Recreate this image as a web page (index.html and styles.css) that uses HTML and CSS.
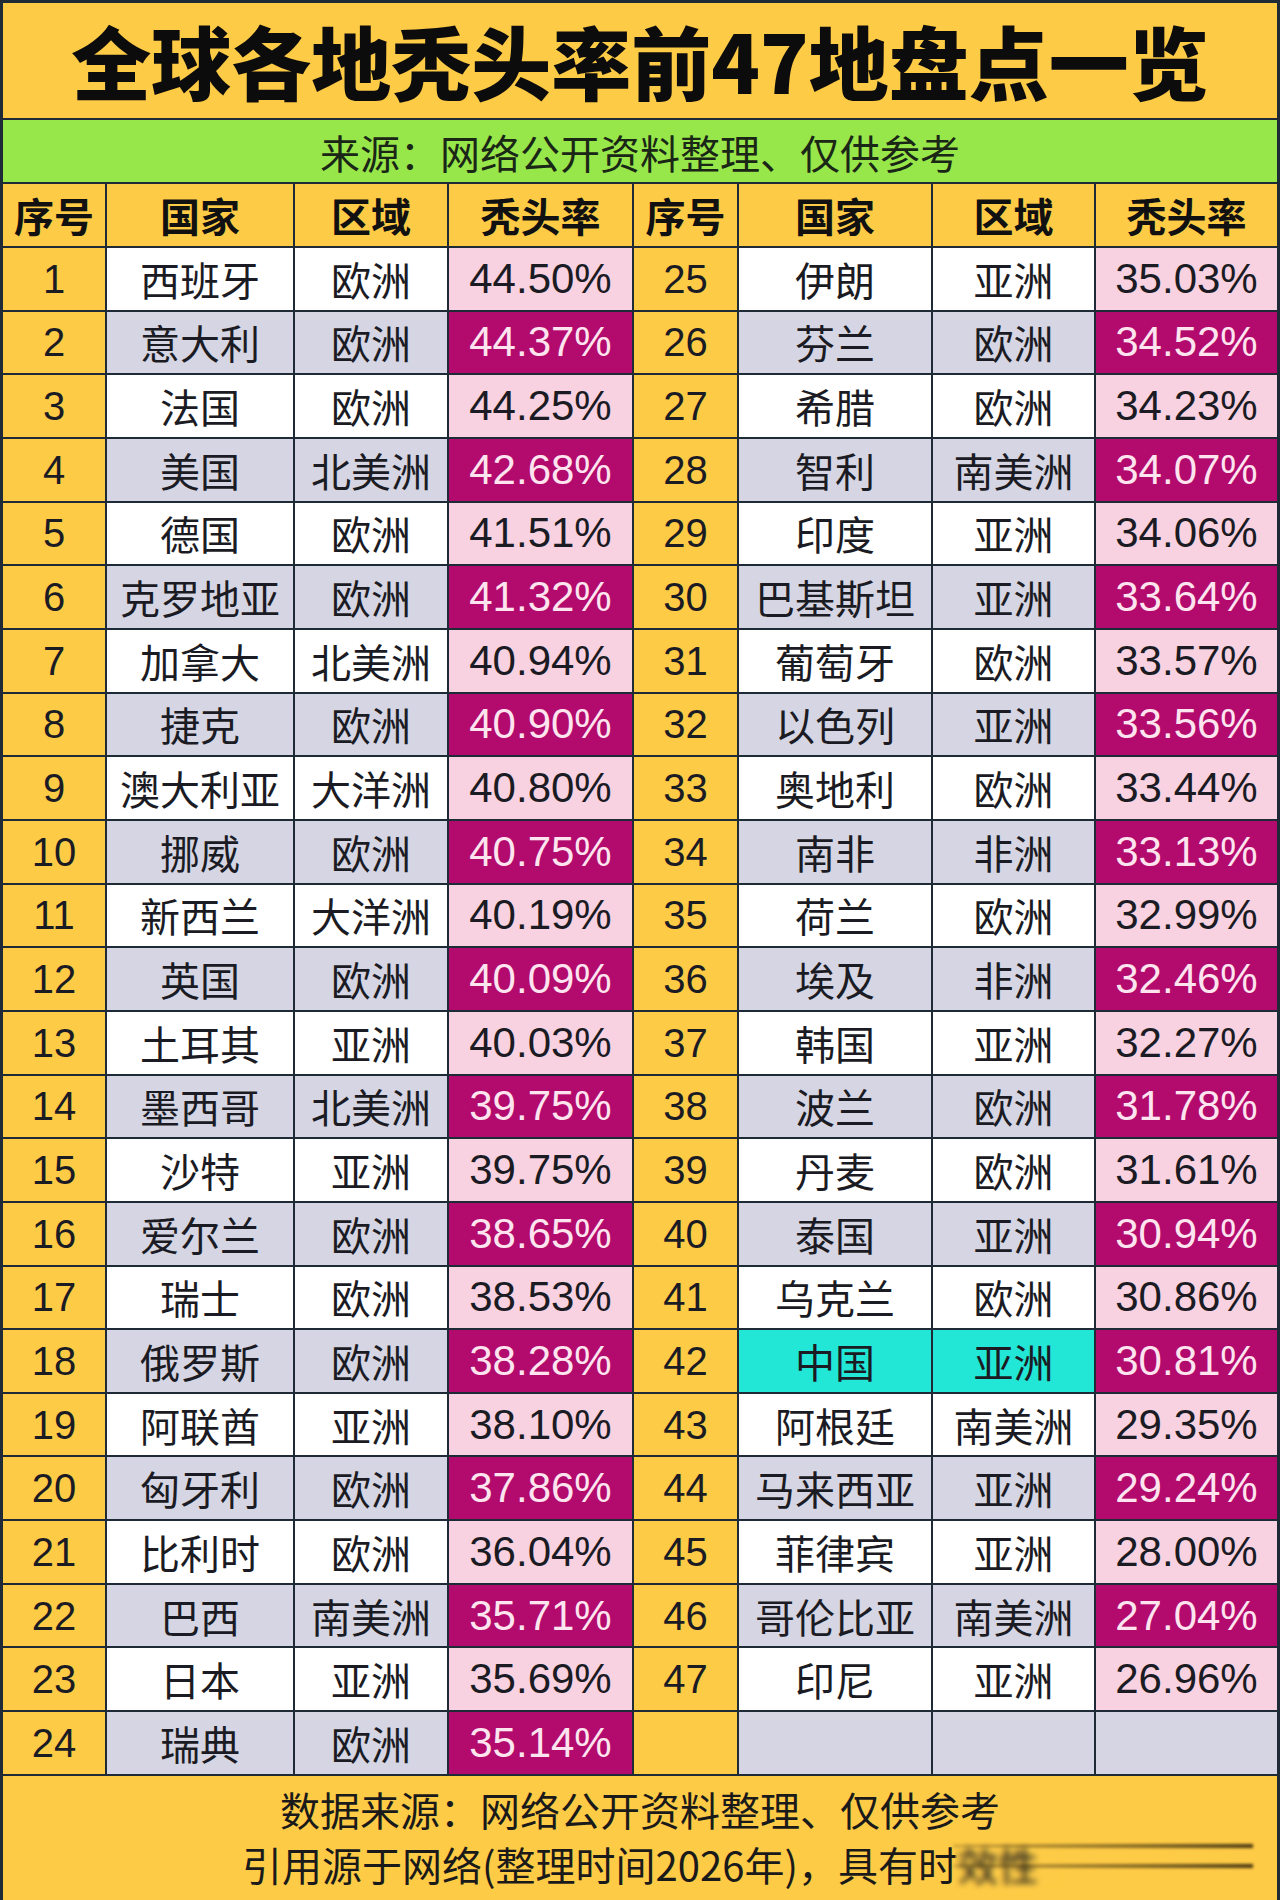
FILE: index.html
```html
<!DOCTYPE html>
<html lang="zh-CN">
<head>
<meta charset="utf-8">
<title>全球各地秃头率前47地盘点一览</title>
<link rel="stylesheet" href="styles.css">
</head>
<body>
<div class="sheet">
  <div class="title">全球各地秃头率前47地盘点一览</div>
  <div class="source">来源：网络公开资料整理、仅供参考</div>

  <div class="hd">序号</div><div class="hd">国家</div><div class="hd">区域</div><div class="hd">秃头率</div>
  <div class="hd">序号</div><div class="hd">国家</div><div class="hd">区域</div><div class="hd">秃头率</div>

  <div class="seq">1</div><div class="w">西班牙</div><div class="w">欧洲</div><div class="p">44.50%</div>
  <div class="seq">25</div><div class="w">伊朗</div><div class="w">亚洲</div><div class="p">35.03%</div>

  <div class="seq">2</div><div class="g">意大利</div><div class="g">欧洲</div><div class="m">44.37%</div>
  <div class="seq">26</div><div class="g">芬兰</div><div class="g">欧洲</div><div class="m">34.52%</div>

  <div class="seq">3</div><div class="w">法国</div><div class="w">欧洲</div><div class="p">44.25%</div>
  <div class="seq">27</div><div class="w">希腊</div><div class="w">欧洲</div><div class="p">34.23%</div>

  <div class="seq">4</div><div class="g">美国</div><div class="g">北美洲</div><div class="m">42.68%</div>
  <div class="seq">28</div><div class="g">智利</div><div class="g">南美洲</div><div class="m">34.07%</div>

  <div class="seq">5</div><div class="w">德国</div><div class="w">欧洲</div><div class="p">41.51%</div>
  <div class="seq">29</div><div class="w">印度</div><div class="w">亚洲</div><div class="p">34.06%</div>

  <div class="seq">6</div><div class="g">克罗地亚</div><div class="g">欧洲</div><div class="m">41.32%</div>
  <div class="seq">30</div><div class="g">巴基斯坦</div><div class="g">亚洲</div><div class="m">33.64%</div>

  <div class="seq">7</div><div class="w">加拿大</div><div class="w">北美洲</div><div class="p">40.94%</div>
  <div class="seq">31</div><div class="w">葡萄牙</div><div class="w">欧洲</div><div class="p">33.57%</div>

  <div class="seq">8</div><div class="g">捷克</div><div class="g">欧洲</div><div class="m">40.90%</div>
  <div class="seq">32</div><div class="g">以色列</div><div class="g">亚洲</div><div class="m">33.56%</div>

  <div class="seq">9</div><div class="w">澳大利亚</div><div class="w">大洋洲</div><div class="p">40.80%</div>
  <div class="seq">33</div><div class="w">奥地利</div><div class="w">欧洲</div><div class="p">33.44%</div>

  <div class="seq">10</div><div class="g">挪威</div><div class="g">欧洲</div><div class="m">40.75%</div>
  <div class="seq">34</div><div class="g">南非</div><div class="g">非洲</div><div class="m">33.13%</div>

  <div class="seq">11</div><div class="w">新西兰</div><div class="w">大洋洲</div><div class="p">40.19%</div>
  <div class="seq">35</div><div class="w">荷兰</div><div class="w">欧洲</div><div class="p">32.99%</div>

  <div class="seq">12</div><div class="g">英国</div><div class="g">欧洲</div><div class="m">40.09%</div>
  <div class="seq">36</div><div class="g">埃及</div><div class="g">非洲</div><div class="m">32.46%</div>

  <div class="seq">13</div><div class="w">土耳其</div><div class="w">亚洲</div><div class="p">40.03%</div>
  <div class="seq">37</div><div class="w">韩国</div><div class="w">亚洲</div><div class="p">32.27%</div>

  <div class="seq">14</div><div class="g">墨西哥</div><div class="g">北美洲</div><div class="m">39.75%</div>
  <div class="seq">38</div><div class="g">波兰</div><div class="g">欧洲</div><div class="m">31.78%</div>

  <div class="seq">15</div><div class="w">沙特</div><div class="w">亚洲</div><div class="p">39.75%</div>
  <div class="seq">39</div><div class="w">丹麦</div><div class="w">欧洲</div><div class="p">31.61%</div>

  <div class="seq">16</div><div class="g">爱尔兰</div><div class="g">欧洲</div><div class="m">38.65%</div>
  <div class="seq">40</div><div class="g">泰国</div><div class="g">亚洲</div><div class="m">30.94%</div>

  <div class="seq">17</div><div class="w">瑞士</div><div class="w">欧洲</div><div class="p">38.53%</div>
  <div class="seq">41</div><div class="w">乌克兰</div><div class="w">欧洲</div><div class="p">30.86%</div>

  <div class="seq">18</div><div class="g">俄罗斯</div><div class="g">欧洲</div><div class="m">38.28%</div>
  <div class="seq">42</div><div class="t">中国</div><div class="t">亚洲</div><div class="m">30.81%</div>

  <div class="seq">19</div><div class="w">阿联酋</div><div class="w">亚洲</div><div class="p">38.10%</div>
  <div class="seq">43</div><div class="w">阿根廷</div><div class="w">南美洲</div><div class="p">29.35%</div>

  <div class="seq">20</div><div class="g">匈牙利</div><div class="g">欧洲</div><div class="m">37.86%</div>
  <div class="seq">44</div><div class="g">马来西亚</div><div class="g">亚洲</div><div class="m">29.24%</div>

  <div class="seq">21</div><div class="w">比利时</div><div class="w">欧洲</div><div class="p">36.04%</div>
  <div class="seq">45</div><div class="w">菲律宾</div><div class="w">亚洲</div><div class="p">28.00%</div>

  <div class="seq">22</div><div class="g">巴西</div><div class="g">南美洲</div><div class="m">35.71%</div>
  <div class="seq">46</div><div class="g">哥伦比亚</div><div class="g">南美洲</div><div class="m">27.04%</div>

  <div class="seq">23</div><div class="w">日本</div><div class="w">亚洲</div><div class="p">35.69%</div>
  <div class="seq">47</div><div class="w">印尼</div><div class="w">亚洲</div><div class="p">26.96%</div>

  <div class="seq">24</div><div class="g">瑞典</div><div class="g">欧洲</div><div class="m">35.14%</div>
  <div class="seq"></div><div class="g"></div><div class="g"></div><div class="g"></div>

  <div class="footer">
    <div class="foot-line">数据来源：网络公开资料整理、仅供参考</div>
    <div class="foot-line">引用源于网络(整理时间2026年)，具有时效性</div>
    <div class="smear"></div>
    <div class="wm-line wm-a"></div>
    <div class="wm-line wm-b"></div>
  </div>
</div>
</body>
</html>
```

FILE: styles.css
```css
html, body {
  margin: 0;
  padding: 0;
  background: #1e2a36;
}

.sheet {
  width: 1280px;
  height: 1900px;
  box-sizing: border-box;
  overflow: hidden;
  display: grid;
  grid-template-columns: 102px 186px 152px 183px 103px 192px 161px 181px;
  grid-template-rows: 115px 62px 62px repeat(24, 61.67px) 125px;
  gap: 2px;
  padding: 3px 3px 0 3px;
  background: #1e2a36;
  font-family: "Liberation Sans", "Noto Sans CJK SC", sans-serif;
  color: #1b1b24;
}

.sheet > div {
  display: flex;
  align-items: center;
  justify-content: center;
  line-height: 1;
  white-space: nowrap;
}

.title {
  grid-column: 1 / -1;
  background: #fecb46;
  font-family: "Noto Sans CJK SC", sans-serif;
  font-weight: 900;
  font-size: 80px;
  color: #0c0c0c;
  padding-bottom: 4px;
  box-sizing: border-box;
}

.source {
  grid-column: 1 / -1;
  background: #97e64a;
  font-family: "Noto Sans CJK SC", sans-serif;
  font-size: 40px;
  color: #1a2616;
  padding-top: 2px;
  box-sizing: border-box;
}

.hd {
  background: #fecb46;
  font-family: "Noto Sans CJK SC", sans-serif;
  font-weight: 700;
  font-size: 40px;
  color: #111111;
}

.seq {
  background: #fecb46;
  font-size: 40px;
}

.w, .g, .t {
  font-family: "Noto Sans CJK SC", sans-serif;
  font-size: 40px;
}

.w { background: #ffffff; }
.g { background: #d5d5e3; }
.t { background: #22e6d6; }

.p, .m {
  font-size: 42px;
}

.p { background: #f8d2e1; }

.m {
  background: #b30a6d;
  color: #fde4ef;
}

.footer {
  grid-column: 1 / -1;
  background: #fecb46;
  position: relative;
  flex-direction: column;
  justify-content: flex-start !important;
  padding-top: 6px;
  box-sizing: border-box;
  font-family: "Noto Sans CJK SC", sans-serif;
  font-size: 40px;
  color: #1a1a1a;
}

.foot-line {
  line-height: 55px;
}

.smear {
  position: absolute;
  left: 952px;
  top: 62px;
  width: 110px;
  height: 52px;
  backdrop-filter: blur(3px);
}

.wm-line {
  position: absolute;
  left: 950px;
  width: 300px;
  height: 4px;
  background: linear-gradient(90deg, rgba(40, 30, 10, 0.15), rgba(40, 30, 10, 0.55) 60%, rgba(40, 30, 10, 0.85));
  filter: blur(1.5px);
}

.wm-a { top: 68px; }
.wm-b { top: 88px; }
```
